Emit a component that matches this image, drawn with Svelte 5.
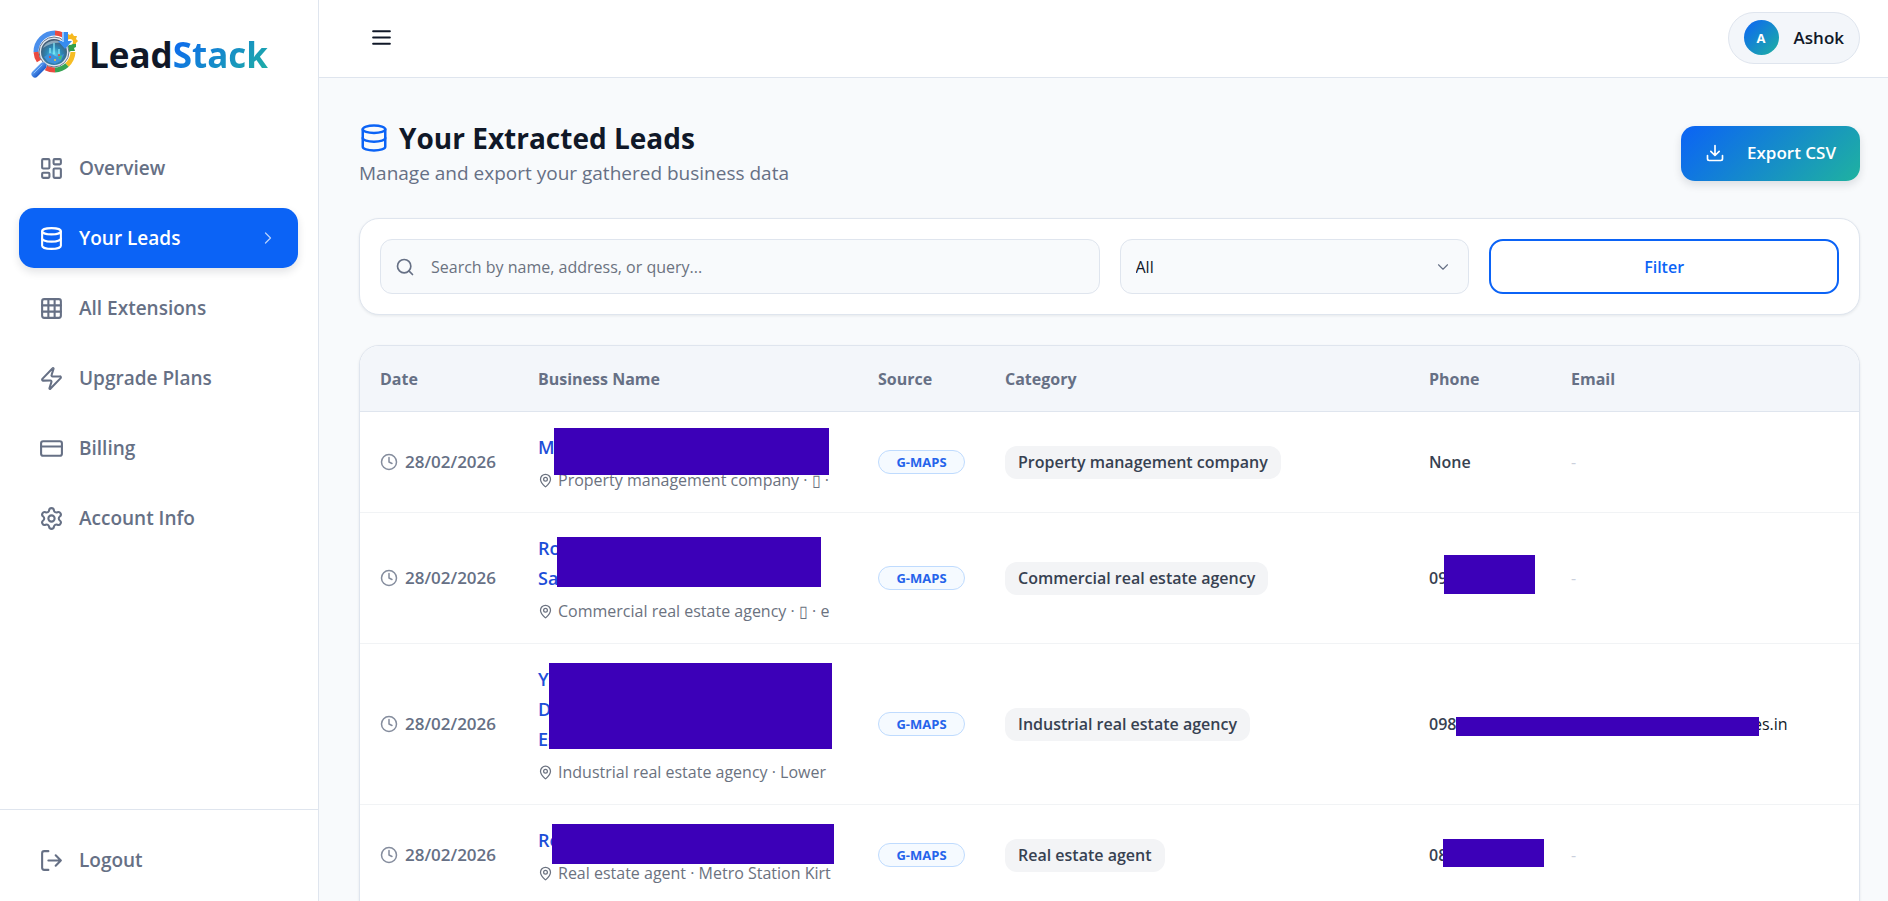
<script lang="ts">
	interface Cover {
		x: number;
		y: number;
		w: number;
		h: number;
	}

	interface Lead {
		date: string;
		name: string[];
		nameCover: Cover;
		address: string;
		source: string;
		category: string;
		phone: string;
		phoneCover?: Cover;
		email?: string;
		emailIndent?: number;
	}

	const navItems = [
		{ label: 'Overview', icon: 'dashboard' },
		{ label: 'Your Leads', icon: 'database' },
		{ label: 'All Extensions', icon: 'grid' },
		{ label: 'Upgrade Plans', icon: 'zap' },
		{ label: 'Billing', icon: 'card' },
		{ label: 'Account Info', icon: 'settings' }
	];

	const leads: Lead[] = [
		{
			date: '28/02/2026',
			name: ['M'],
			nameCover: { x: 36, y: 16, w: 275, h: 47 },
			address: 'Property management company · ▯ ·',
			source: 'G-MAPS',
			category: 'Property management company',
			phone: 'None'
		},
		{
			date: '28/02/2026',
			name: ['Ro', 'Sa'],
			nameCover: { x: 39, y: 24, w: 264, h: 50 },
			address: 'Commercial real estate agency · ▯ · e',
			source: 'G-MAPS',
			category: 'Commercial real estate agency',
			phone: '09',
			phoneCover: { x: 35, y: 42, w: 91, h: 39 }
		},
		{
			date: '28/02/2026',
			name: ['Ya', 'D', 'Es'],
			nameCover: { x: 31, y: 19, w: 283, h: 86 },
			address: 'Industrial real estate agency · Lower',
			source: 'G-MAPS',
			category: 'Industrial real estate agency',
			phone: '098',
			phoneCover: { x: 47, y: 73, w: 303, h: 19 },
			email: 'es.in',
			emailIndent: 182
		},
		{
			date: '28/02/2026',
			name: ['Re'],
			nameCover: { x: 34, y: 19, w: 282, h: 40 },
			address: 'Real estate agent · Metro Station Kirt',
			source: 'G-MAPS',
			category: 'Real estate agent',
			phone: '08',
			phoneCover: { x: 34, y: 34, w: 101, h: 28 }
		}
	];

	let active = $state('Your Leads');
	let search = $state('');
	let source = $state('All');
</script>

{#snippet icon(name: string, size: number, stroke = 2)}
	<svg
		class="icon"
		width={size}
		height={size}
		viewBox="0 0 24 24"
		fill="none"
		stroke="currentColor"
		stroke-width={stroke}
		stroke-linecap="round"
		stroke-linejoin="round"
		aria-hidden="true"
	>
		{#if name === 'dashboard'}
			<rect width="7" height="9" x="3" y="3" rx="1" />
			<rect width="7" height="5" x="14" y="3" rx="1" />
			<rect width="7" height="9" x="14" y="12" rx="1" />
			<rect width="7" height="5" x="3" y="16" rx="1" />
		{:else if name === 'database'}
			<ellipse cx="12" cy="5" rx="9" ry="3" />
			<path d="M3 5V19A9 3 0 0 0 21 19V5" />
			<path d="M3 12A9 3 0 0 0 21 12" />
		{:else if name === 'grid'}
			<rect width="18" height="18" x="3" y="3" rx="2" />
			<path d="M3 9h18M3 15h18M9 3v18M15 3v18" />
		{:else if name === 'zap'}
			<path
				d="M4 14a1 1 0 0 1-.78-1.63l9.9-10.2a.5.5 0 0 1 .86.46l-1.92 6.02A1 1 0 0 0 13 10h7a1 1 0 0 1 .78 1.63l-9.9 10.2a.5.5 0 0 1-.86-.46l1.92-6.02A1 1 0 0 0 11 14z"
			/>
		{:else if name === 'card'}
			<rect width="20" height="14" x="2" y="5" rx="2" />
			<path d="M2 10h20" />
		{:else if name === 'settings'}
			<path
				d="M9.671 4.136a2.34 2.34 0 0 1 4.659 0 2.34 2.34 0 0 0 3.319 1.915 2.34 2.34 0 0 1 2.33 4.033 2.34 2.34 0 0 0 0 3.831 2.34 2.34 0 0 1-2.33 4.033 2.34 2.34 0 0 0-3.319 1.915 2.34 2.34 0 0 1-4.659 0 2.34 2.34 0 0 0-3.32-1.915 2.34 2.34 0 0 1-2.33-4.033 2.34 2.34 0 0 0 0-3.831A2.34 2.34 0 0 1 6.35 6.051a2.34 2.34 0 0 0 3.319-1.915"
			/>
			<circle cx="12" cy="12" r="3" />
		{:else if name === 'logout'}
			<path d="M9 21H5a2 2 0 0 1-2-2V5a2 2 0 0 1 2-2h4" />
			<path d="m16 17 5-5-5-5M21 12H9" />
		{:else if name === 'menu'}
			<path d="M4 6h16M4 12h16M4 18h16" />
		{:else if name === 'download'}
			<path d="M21 15v4a2 2 0 0 1-2 2H5a2 2 0 0 1-2-2v-4M7 10l5 5 5-5M12 15V3" />
		{:else if name === 'search'}
			<circle cx="11" cy="11" r="8" />
			<path d="m21 21-4.3-4.3" />
		{:else if name === 'clock'}
			<circle cx="12" cy="12" r="10" />
			<path d="M12 6v6l4 2" />
		{:else if name === 'pin'}
			<path
				d="M20 10c0 4.993-5.539 10.193-7.399 11.799a1 1 0 0 1-1.202 0C9.539 20.193 4 14.993 4 10a8 8 0 0 1 16 0"
			/>
			<circle cx="12" cy="10" r="3" />
		{:else if name === 'right'}
			<path d="m9 18 6-6-6-6" />
		{:else if name === 'down'}
			<path d="m6 9 6 6 6-6" />
		{/if}
	</svg>
{/snippet}

{#snippet cover(box: Cover)}
	<span
		class="cover"
		style="left: {box.x}px; top: {box.y}px; width: {box.w}px; height: {box.h}px"
	></span>
{/snippet}

<div class="shell">
	<aside class="sidebar">
		<a class="brand" href="#home">
			<svg class="logo" viewBox="0 0 48 50" aria-hidden="true">
				<defs>
					<radialGradient id="lens" cx="50%" cy="60%" r="55%">
						<stop offset="0" stop-color="#5fd9ee" />
						<stop offset="0.5" stop-color="#2b86b6" />
						<stop offset="1" stop-color="#45586e" />
					</radialGradient>
					<linearGradient id="handle" x1="0" y1="0" x2="1" y2="1">
						<stop offset="0" stop-color="#6fb2ff" />
						<stop offset="1" stop-color="#0a48bd" />
					</linearGradient>
				</defs>
				<g fill="none" stroke-width="5">
					<path d="M6 22A19 19 0 0 1 25 3" stroke="#4a8fec" />
					<path d="M25 3A19 19 0 0 1 33 5" stroke="#ea4a40" />
					<path d="M43 22A19 19 0 0 1 37 35" stroke="#f6bd25" />
					<path d="M37 35A19 19 0 0 1 25 40" stroke="#36a454" />
					<path d="M25 40A19 19 0 0 1 16 38" stroke="#ea4a40" />
					<path d="M9 31A19 19 0 0 1 6 22" stroke="#ea4a40" />
				</g>
				<path
					d="M38 4l2 1 2-2 2 3 3 0-1 3 2 2-2 2 0 2-4-1-4 0z"
					fill="#f6b91f"
				/>
				<path d="M40 14l6 0 0 3-2 1 1 3-4 0-4 2-1-5z" fill="#34a04c" />
				<circle cx="40" cy="12" r="3" fill="#fff" />
				<circle cx="24" cy="22" r="14" fill="url(#lens)" stroke="#dfe7f0" stroke-width="2" />
				<circle cx="24" cy="22" r="15" fill="none" stroke="#67778c" stroke-width="1" />
				<path d="M13 18c3-7 13-10 19-5-7-1-13 1-19 5z" fill="#d7e7f2" opacity="0.5" />
				<path d="M23 13h2v11h-2zM19 18h2v7h-2zM28 19h2v6h-2z" fill="#8df4ff" opacity="0.6" />
				<path d="M14 27l6-4 7 4 7-3-3 7-6 3-7-2z" fill="#3e92dc" />
				<circle cx="20" cy="27" r="1" fill="#ea4335" />
				<circle cx="25" cy="30" r="1" fill="#ffca38" />
				<circle cx="29" cy="25" r="1" fill="#ea4335" />
				<path d="M28 28l4-3-1 5z" fill="#49c56a" />
				<path d="M32 2h6v9h4l-7 8-7-8h4z" fill="#368cf0" />
				<path d="M32 2h2v10h-2z" fill="#91c7ff" />
				<path d="M14 31l3 3-3 3-3-3z" fill="#b9c4d0" />
				<path d="M5 44l8-8" stroke="url(#handle)" stroke-width="7" stroke-linecap="round" />
				<path d="M4 43l8-8" stroke="#8cc1ff" stroke-width="1" stroke-linecap="round" />
			</svg>
			<span class="brand-name">Lead<span class="brand-accent">Stack</span></span>
		</a>

		<nav class="nav">
			{#each navItems as item}
				<a
					class="nav-item"
					class:active={active === item.label}
					href="#{item.icon}"
					onclick={() => (active = item.label)}
				>
					{@render icon(item.icon, 25)}
					<span>{item.label}</span>
					{#if active === item.label}
						<span class="nav-arrow">{@render icon('right', 20, 1.5)}</span>
					{/if}
				</a>
			{/each}
		</nav>

		<div class="sidebar-foot">
			<a class="nav-item" href="#logout">
				{@render icon('logout', 25)}
				<span>Logout</span>
			</a>
		</div>
	</aside>

	<div class="content">
		<header class="topbar">
			<button class="menu-btn" type="button" aria-label="Toggle menu">
				{@render icon('menu', 25)}
			</button>
			<button class="user" type="button">
				<span class="avatar">A</span>
				<span>Ashok</span>
			</button>
		</header>

		<main class="page">
			<div class="page-head">
				<div>
					<h1>{@render icon('database', 30)} Your Extracted Leads</h1>
					<p>Manage and export your gathered business data</p>
				</div>
				<button class="export" type="button">
					{@render icon('download', 20)}
					<span>Export CSV</span>
				</button>
			</div>

			<form class="filters" onsubmit={(e) => e.preventDefault()}>
				<label class="field search">
					{@render icon('search', 20)}
					<input
						type="text"
						aria-label="Search leads"
						placeholder="Search by name, address, or query..."
						bind:value={search}
					/>
				</label>
				<label class="field source">
					<select aria-label="Source" bind:value={source}>
						<option>All</option>
						<option>G-MAPS</option>
					</select>
					{@render icon('down', 18, 1.5)}
				</label>
				<button class="filter-btn" type="submit">Filter</button>
			</form>

			<div class="table-card">
				<table>
					<thead>
						<tr>
							<th class="col-date">Date</th>
							<th class="col-name">Business Name</th>
							<th class="col-source">Source</th>
							<th>Category</th>
							<th class="col-phone">Phone</th>
							<th class="col-email">Email</th>
						</tr>
					</thead>
					<tbody>
						{#each leads as lead}
							<tr>
								<td>
									<div class="date">{@render icon('clock', 18)}<span>{lead.date}</span></div>
								</td>
								<td>
									<a class="name" href="#lead">
										{#each lead.name as line}
											<span>{line}</span>
										{/each}
									</a>
									<div class="address">{@render icon('pin', 15)}<span>{lead.address}</span></div>
									{@render cover(lead.nameCover)}
								</td>
								<td><span class="badge">{lead.source}</span></td>
								<td><span class="category">{lead.category}</span></td>
								<td class="phone">
									{lead.phone}
									{#if lead.phoneCover}
										{@render cover(lead.phoneCover)}
									{/if}
								</td>
								<td class="email">
									{#if lead.email}
										<span style="padding-left: {lead.emailIndent}px">{lead.email}</span>
									{:else}
										<span class="none">-</span>
									{/if}
								</td>
							</tr>
						{/each}
					</tbody>
				</table>
			</div>
		</main>
	</div>
</div>

<style>
	:global(body) {
		margin: 0;
		background: #f8fafc;
	}

	.shell {
		display: flex;
		height: 100vh;
		overflow: hidden;
		font-family: 'Open Sans', 'Noto Sans', sans-serif;
		font-size: 16px;
		line-height: 24px;
		color: #101828;
	}

	.shell :global(*) {
		box-sizing: border-box;
	}

	button,
	input,
	select {
		font: inherit;
		color: inherit;
	}

	button,
	select {
		cursor: pointer;
	}

	a {
		text-decoration: none;
	}

	.icon {
		display: block;
		flex-shrink: 0;
	}

	/* Sidebar */
	.sidebar {
		display: flex;
		flex-direction: column;
		flex: 0 0 319px;
		background: #fff;
		border-right: 1px solid #dfe5ee;
	}

	.brand {
		display: flex;
		align-items: center;
		gap: 11px;
		padding: 28px 30px 56px;
		color: #101828;
	}

	.logo {
		width: 48px;
		height: 50px;
	}

	.brand-name {
		font-size: 35px;
		line-height: 54px;
		font-weight: 700;
	}

	.brand-accent {
		background: linear-gradient(135deg, #0b63f6, #1fb2a0);
		-webkit-background-clip: text;
		background-clip: text;
		color: transparent;
	}

	.nav {
		display: flex;
		flex-direction: column;
		gap: 10px;
		padding: 0 20px 0 19px;
	}

	.nav-item {
		display: flex;
		align-items: center;
		gap: 15px;
		height: 60px;
		padding: 0 20px;
		border-radius: 15px;
		font-size: 19px;
		font-weight: 600;
		color: #667085;
	}

	.nav-item.active {
		background: #0b63f6;
		color: #fff;
		box-shadow: 0 4px 8px rgba(16, 24, 40, 0.12);
	}

	.nav-arrow {
		margin-left: auto;
		opacity: 0.7;
	}

	.sidebar-foot {
		margin-top: auto;
		padding: 20px 19px 11px;
		border-top: 1px solid #dfe5ee;
	}

	/* Top bar */
	.content {
		display: flex;
		flex-direction: column;
		flex: 1;
		min-width: 0;
	}

	.topbar {
		display: flex;
		align-items: center;
		justify-content: space-between;
		flex: 0 0 78px;
		padding: 0 28px 2px 40px;
		background: #fff;
		border-bottom: 1px solid #dfe5ee;
	}

	.menu-btn {
		padding: 10px;
		background: none;
		border: 0;
	}

	.user {
		display: flex;
		align-items: center;
		gap: 15px;
		height: 52px;
		padding: 0 15px;
		background: #f3f6fa;
		border: 1px solid #dfe5ee;
		border-radius: 26px;
		font-size: 17px;
		font-weight: 600;
	}

	.avatar {
		display: grid;
		place-items: center;
		width: 35px;
		height: 35px;
		border-radius: 50%;
		background: linear-gradient(135deg, #0b63f6, #1fb2a0);
		color: #fff;
		font-size: 13px;
		font-weight: 700;
	}

	/* Page */
	.page {
		flex: 1;
		min-height: 0;
		padding: 40px 28px 40px 40px;
		overflow-y: auto;
		scrollbar-width: none;
	}

	.page-head {
		display: flex;
		align-items: center;
		justify-content: space-between;
		margin-bottom: 30px;
	}

	h1 {
		display: flex;
		align-items: center;
		gap: 10px;
		margin: 0;
		font-size: 28px;
		line-height: 40px;
		font-weight: 700;
	}

	h1 .icon {
		color: #0b63f6;
	}

	.page-head p {
		margin: 0;
		font-size: 19px;
		line-height: 30px;
		color: #667085;
	}

	.export {
		display: flex;
		align-items: center;
		gap: 22px;
		height: 55px;
		padding: 0 24px;
		border: 0;
		border-radius: 14px;
		background: linear-gradient(135deg, #0b63f6, #1fb2a0);
		box-shadow: 0 4px 8px rgba(16, 24, 40, 0.12);
		color: #fff;
		font-size: 17px;
		font-weight: 600;
	}

	.filters {
		display: grid;
		grid-template-columns: repeat(12, 1fr);
		gap: 20px;
		margin-bottom: 30px;
		padding: 20px;
		background: #fff;
		border: 1px solid #dfe5ee;
		border-radius: 20px;
		box-shadow: 0 1px 3px rgba(16, 24, 40, 0.08);
	}

	.field {
		display: flex;
		align-items: center;
		height: 55px;
		background: #f8fafc;
		border: 1px solid #dfe5ee;
		border-radius: 12px;
		color: #667085;
	}

	.search {
		grid-column: span 6;
		gap: 16px;
		padding: 0 14px;
	}

	.search input {
		flex: 1;
		min-width: 0;
		padding: 0;
		border: 0;
		outline: 0;
		background: none;
		color: #101828;
	}

	.search input::placeholder {
		color: #6b7280;
		opacity: 1;
	}

	.source {
		grid-column: span 3;
		padding-right: 16px;
	}

	.source select {
		flex: 1;
		height: 100%;
		padding: 0 15px;
		appearance: none;
		border: 0;
		outline: 0;
		background: none;
		color: #101828;
	}

	.filter-btn {
		grid-column: span 3;
		background: #fff;
		border: 2px solid #0b63f6;
		border-radius: 14px;
		color: #0b63f6;
		font-weight: 600;
	}

	/* Leads table */
	.table-card {
		overflow: hidden;
		padding-bottom: 20px;
		background: #fff;
		border: 1px solid #dfe5ee;
		border-radius: 20px;
		box-shadow: 0 1px 3px rgba(16, 24, 40, 0.08);
	}

	table {
		width: 100%;
		table-layout: fixed;
		border-collapse: separate;
		border-spacing: 0;
	}

	th {
		height: 66px;
		padding: 0 20px;
		background: #f3f6fa;
		border-bottom: 1px solid #dfe5ee;
		font-weight: 700;
		text-align: left;
		color: #667085;
	}

	td {
		position: relative;
		padding: 20px;
		border-bottom: 1px solid #f1f3f5;
		vertical-align: middle;
		white-space: nowrap;
	}

	.col-date {
		width: 158px;
	}

	.col-name {
		width: 340px;
	}

	.col-source {
		width: 127px;
	}

	.col-phone {
		width: 142px;
	}

	.col-email {
		width: 308px;
	}

	.date {
		display: flex;
		align-items: center;
		gap: 7px;
		font-size: 17px;
		font-weight: 600;
		color: #667085;
	}

	.date .icon {
		opacity: 0.8;
	}

	.name {
		display: block;
		font-size: 18px;
		line-height: 30px;
		font-weight: 600;
		color: #1d4ed8;
	}

	.name span {
		display: block;
	}

	.address {
		display: flex;
		align-items: center;
		gap: 5px;
		height: 30px;
		padding-top: 6px;
		overflow: hidden;
		color: #6b7280;
	}

	.badge {
		display: flex;
		align-items: center;
		justify-content: center;
		height: 24px;
		border: 1px solid #bfdbfe;
		border-radius: 12px;
		background: #f5faff;
		font-size: 13px;
		font-weight: 700;
		color: #2563eb;
	}

	.category {
		display: inline-block;
		padding: 0 13px;
		border-radius: 12px;
		background: #f3f4f6;
		line-height: 33px;
		font-weight: 600;
		color: #374151;
	}

	.phone {
		font-weight: 600;
		color: #374151;
	}

	.none {
		color: #cbd0dc;
	}

	.cover {
		position: absolute;
		z-index: 1;
		background: #3c00b8;
	}
</style>
